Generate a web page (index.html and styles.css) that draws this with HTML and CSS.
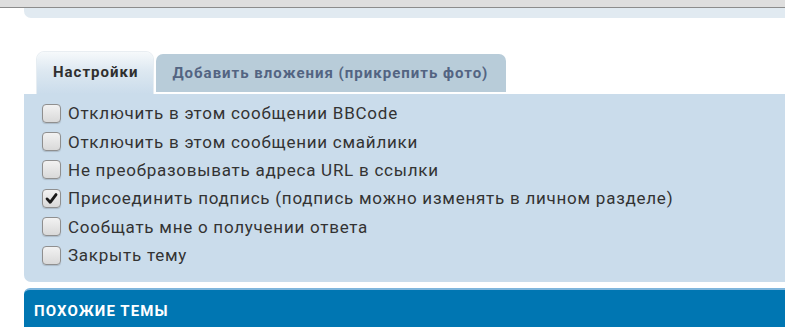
FILE: index.html
```html
<!DOCTYPE html>
<html lang="ru">
<head>
<meta charset="utf-8">
<title>Опции</title>
<link rel="stylesheet" href="styles.css">
</head>
<body>
<div class="topbar"></div>
<div class="prevpanel"></div>
<div class="tabs">
  <div class="tab active">Настройки</div>
  <div class="tab">Добавить вложения (прикрепить фото)</div>
</div>
<div class="panel">
  <label class="row"><span class="cb"></span>Отключить в этом сообщении BBCode</label>
  <label class="row"><span class="cb"></span>Отключить в этом сообщении смайлики</label>
  <label class="row"><span class="cb"></span>Не преобразовывать адреса URL в ссылки</label>
  <label class="row"><span class="cb checked"><svg viewBox="0 0 18 18" width="17" height="17"><path d="M4.3 9.4 L7.6 13 L13.8 4.8" fill="none" stroke="#1a1a1a" stroke-width="3" stroke-linecap="round" stroke-linejoin="round"/></svg></span>Присоединить подпись (подпись можно изменять в личном разделе)</label>
  <label class="row"><span class="cb"></span>Сообщать мне о получении ответа</label>
  <label class="row"><span class="cb"></span>Закрыть тему</label>
</div>
<div class="forumbg">
  <h3 class="forumbg-title">ПОХОЖИЕ ТЕМЫ</h3>
</div>
</body>
</html>
```

FILE: styles.css
```css
html, body {
  margin: 0;
  padding: 0;
  background: #ffffff;
  font-family: Roboto, "Noto Sans", "DejaVu Sans", sans-serif;
  overflow: hidden;
}

.topbar {
  height: 7px;
  background: #dedede;
  border-bottom: 1px solid #8c8c8c;
}

.prevpanel {
  margin-left: 24px;
  height: 10px;
  background: #e1eaf1;
  border-radius: 0 0 0 7px;
}

.tabs {
  display: flex;
  align-items: flex-end;
  gap: 3px;
  margin-top: 34px;
  padding-left: 37px;
}

.tab {
  font-size: 15px;
  font-weight: 700;
  letter-spacing: 1px;
  line-height: 38px;
  height: 38px;
  padding: 0 18px 0 16px;
  border-radius: 7px 7px 0 0;
  background: #b8ccd9;
  color: #536482;
  margin-bottom: 2px;
  white-space: nowrap;
}

.tab.active {
  height: 42px;
  line-height: 38px;
  padding: 1px 15px 3px 16px;
  box-sizing: border-box;
  color: #2f2f2f;
  margin-bottom: 0;
  background: linear-gradient(to bottom, #f6f9fb 0%, #dde8f1 45%, #cadceb 100%);
  box-shadow: 0 -1px 0 #e9eef2, -1px 0 0 #e6edf2, 1px 0 0 #e6edf2;
}

.panel {
  margin-left: 24px;
  background: #cadceb;
  border-radius: 0 0 0 7px;
  padding: 5px 0 13px 18px;
}

.row {
  display: flex;
  align-items: center;
  height: 28.4px;
  font-size: 17px;
  letter-spacing: 0.75px;
  color: #333333;
  white-space: nowrap;
}

.cb {
  width: 17px;
  height: 17px;
  margin-right: 7px;
  border: 1px solid #8f8f8f;
  border-radius: 4px;
  background: linear-gradient(to bottom, #f2f2f2 0%, #d9d9d9 100%);
  box-shadow: 0 1px 1px rgba(0, 0, 0, 0.15);
  display: flex;
  align-items: center;
  justify-content: center;
  flex: none;
}

.cb svg {
  display: block;
}

.forumbg {
  margin-top: 6px;
  margin-left: 24px;
  height: 40px;
  background: #0076b2;
  border-top: 2px solid #7fb6dd;
  border-radius: 6px 0 0 0;
  box-sizing: border-box;
}

.forumbg-title {
  margin: 0;
  padding: 12px 0 0 10px;
  font-size: 15px;
  line-height: 18px;
  font-weight: 700;
  color: #ffffff;
  letter-spacing: 1.1px;
}
```
